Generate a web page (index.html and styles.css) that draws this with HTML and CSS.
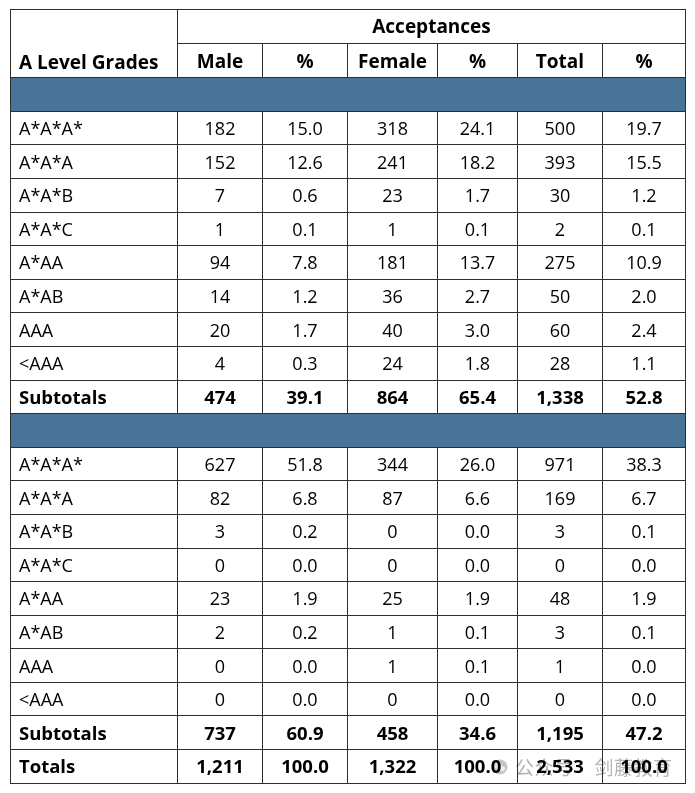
FILE: index.html
```html
<!DOCTYPE html>
<html>
<head>
<meta charset="utf-8">
<link rel="stylesheet" href="styles.css">
</head>
<body>
<div class="page">
  <table class="grades">
    <colgroup>
      <col class="c-grade"><col class="c-male"><col class="c-mp"><col class="c-female"><col class="c-fp"><col class="c-total"><col class="c-tp">
    </colgroup>
    <thead>
      <tr>
        <th rowspan="2" class="label">A Level Grades</th>
        <th colspan="6" class="group">Acceptances</th>
      </tr>
      <tr>
        <th>Male</th><th>%</th><th>Female</th><th>%</th><th>Total</th><th>%</th>
      </tr>
    </thead>
    <tbody>
      <tr class="band"><td colspan="7"></td></tr>
      <tr><td class="label">A*A*A*</td><td>182</td><td>15.0</td><td>318</td><td>24.1</td><td>500</td><td>19.7</td></tr>
      <tr><td class="label">A*A*A</td><td>152</td><td>12.6</td><td>241</td><td>18.2</td><td>393</td><td>15.5</td></tr>
      <tr><td class="label">A*A*B</td><td>7</td><td>0.6</td><td>23</td><td>1.7</td><td>30</td><td>1.2</td></tr>
      <tr><td class="label">A*A*C</td><td>1</td><td>0.1</td><td>1</td><td>0.1</td><td>2</td><td>0.1</td></tr>
      <tr><td class="label">A*AA</td><td>94</td><td>7.8</td><td>181</td><td>13.7</td><td>275</td><td>10.9</td></tr>
      <tr><td class="label">A*AB</td><td>14</td><td>1.2</td><td>36</td><td>2.7</td><td>50</td><td>2.0</td></tr>
      <tr><td class="label">AAA</td><td>20</td><td>1.7</td><td>40</td><td>3.0</td><td>60</td><td>2.4</td></tr>
      <tr><td class="label">&lt;AAA</td><td>4</td><td>0.3</td><td>24</td><td>1.8</td><td>28</td><td>1.1</td></tr>
      <tr class="sum"><td class="label">Subtotals</td><td>474</td><td>39.1</td><td>864</td><td>65.4</td><td>1,338</td><td>52.8</td></tr>
      <tr class="band"><td colspan="7"></td></tr>
      <tr><td class="label">A*A*A*</td><td>627</td><td>51.8</td><td>344</td><td>26.0</td><td>971</td><td>38.3</td></tr>
      <tr><td class="label">A*A*A</td><td>82</td><td>6.8</td><td>87</td><td>6.6</td><td>169</td><td>6.7</td></tr>
      <tr><td class="label">A*A*B</td><td>3</td><td>0.2</td><td>0</td><td>0.0</td><td>3</td><td>0.1</td></tr>
      <tr><td class="label">A*A*C</td><td>0</td><td>0.0</td><td>0</td><td>0.0</td><td>0</td><td>0.0</td></tr>
      <tr><td class="label">A*AA</td><td>23</td><td>1.9</td><td>25</td><td>1.9</td><td>48</td><td>1.9</td></tr>
      <tr><td class="label">A*AB</td><td>2</td><td>0.2</td><td>1</td><td>0.1</td><td>3</td><td>0.1</td></tr>
      <tr><td class="label">AAA</td><td>0</td><td>0.0</td><td>1</td><td>0.1</td><td>1</td><td>0.0</td></tr>
      <tr><td class="label">&lt;AAA</td><td>0</td><td>0.0</td><td>0</td><td>0.0</td><td>0</td><td>0.0</td></tr>
      <tr class="sum"><td class="label">Subtotals</td><td>737</td><td>60.9</td><td>458</td><td>34.6</td><td>1,195</td><td>47.2</td></tr>
      <tr class="sum"><td class="label">Totals</td><td>1,211</td><td>100.0</td><td>1,322</td><td>100.0</td><td>2,533</td><td>100.0</td></tr>
    </tbody>
  </table>
  <div class="watermark">
    <svg class="wm-icon" width="16" height="16" viewBox="0 0 16 16"><circle cx="8" cy="8" r="7.5" fill="#bdbdbd"/><ellipse cx="6" cy="7" rx="3.6" ry="3" fill="#e2e2e2"/><ellipse cx="10" cy="9.5" rx="3" ry="2.5" fill="#ededed"/></svg>
    <span class="wm-a">公众号</span><span class="wm-b">剑藤教育</span>
  </div>
</div>
</body>
</html>
```

FILE: styles.css
```css
html, body {
  margin: 0;
  padding: 0;
  background: #ffffff;
}
.page {
  position: relative;
  padding: 9px 10px 0 10px;
  font-family: "Open Sans", "Noto Sans", "Noto Sans CJK SC", sans-serif;
  color: #000;
}
.grades {
  border-collapse: collapse;
  table-layout: fixed;
  width: 675px;
  border: 1px solid #222;
}
.c-grade { width: 167px; }
.c-male { width: 85px; }
.c-mp { width: 85px; }
.c-female { width: 90px; }
.c-fp { width: 80px; }
.c-total { width: 85px; }
.c-tp { width: 83px; }
.grades th, .grades td {
  border: 1px solid #2e2e2e;
  height: 32.6px;
  padding: 0;
  text-align: center;
  vertical-align: middle;
  font-size: 18px;
  font-weight: 500;
  line-height: 20px;
}
.grades th {
  font-weight: 700;
  font-size: 19px;
  padding-top: 1px;
}
.grades th.label {
  text-align: left;
  vertical-align: bottom;
  padding: 0 0 5px 8px;
}
.grades th.group {
  padding-top: 0;
}
.grades td.label {
  text-align: left;
  padding-left: 8px;
}
.grades tr.band td {
  background: #4a7399;
}
.grades tr.sum td {
  font-weight: 700;
  font-size: 18.5px;
}
.watermark {
  position: absolute;
  left: 492px;
  top: 753px;
  display: flex;
  align-items: center;
  color: #b4b4b4;
  mix-blend-mode: multiply;
  font-size: 19px;
  letter-spacing: 0.5px;
  font-family: "Noto Sans CJK SC", sans-serif;
  pointer-events: none;
}
.wm-icon { opacity: 0.85; margin-right: 7px; }
.wm-b { margin-left: 21px; }
```
